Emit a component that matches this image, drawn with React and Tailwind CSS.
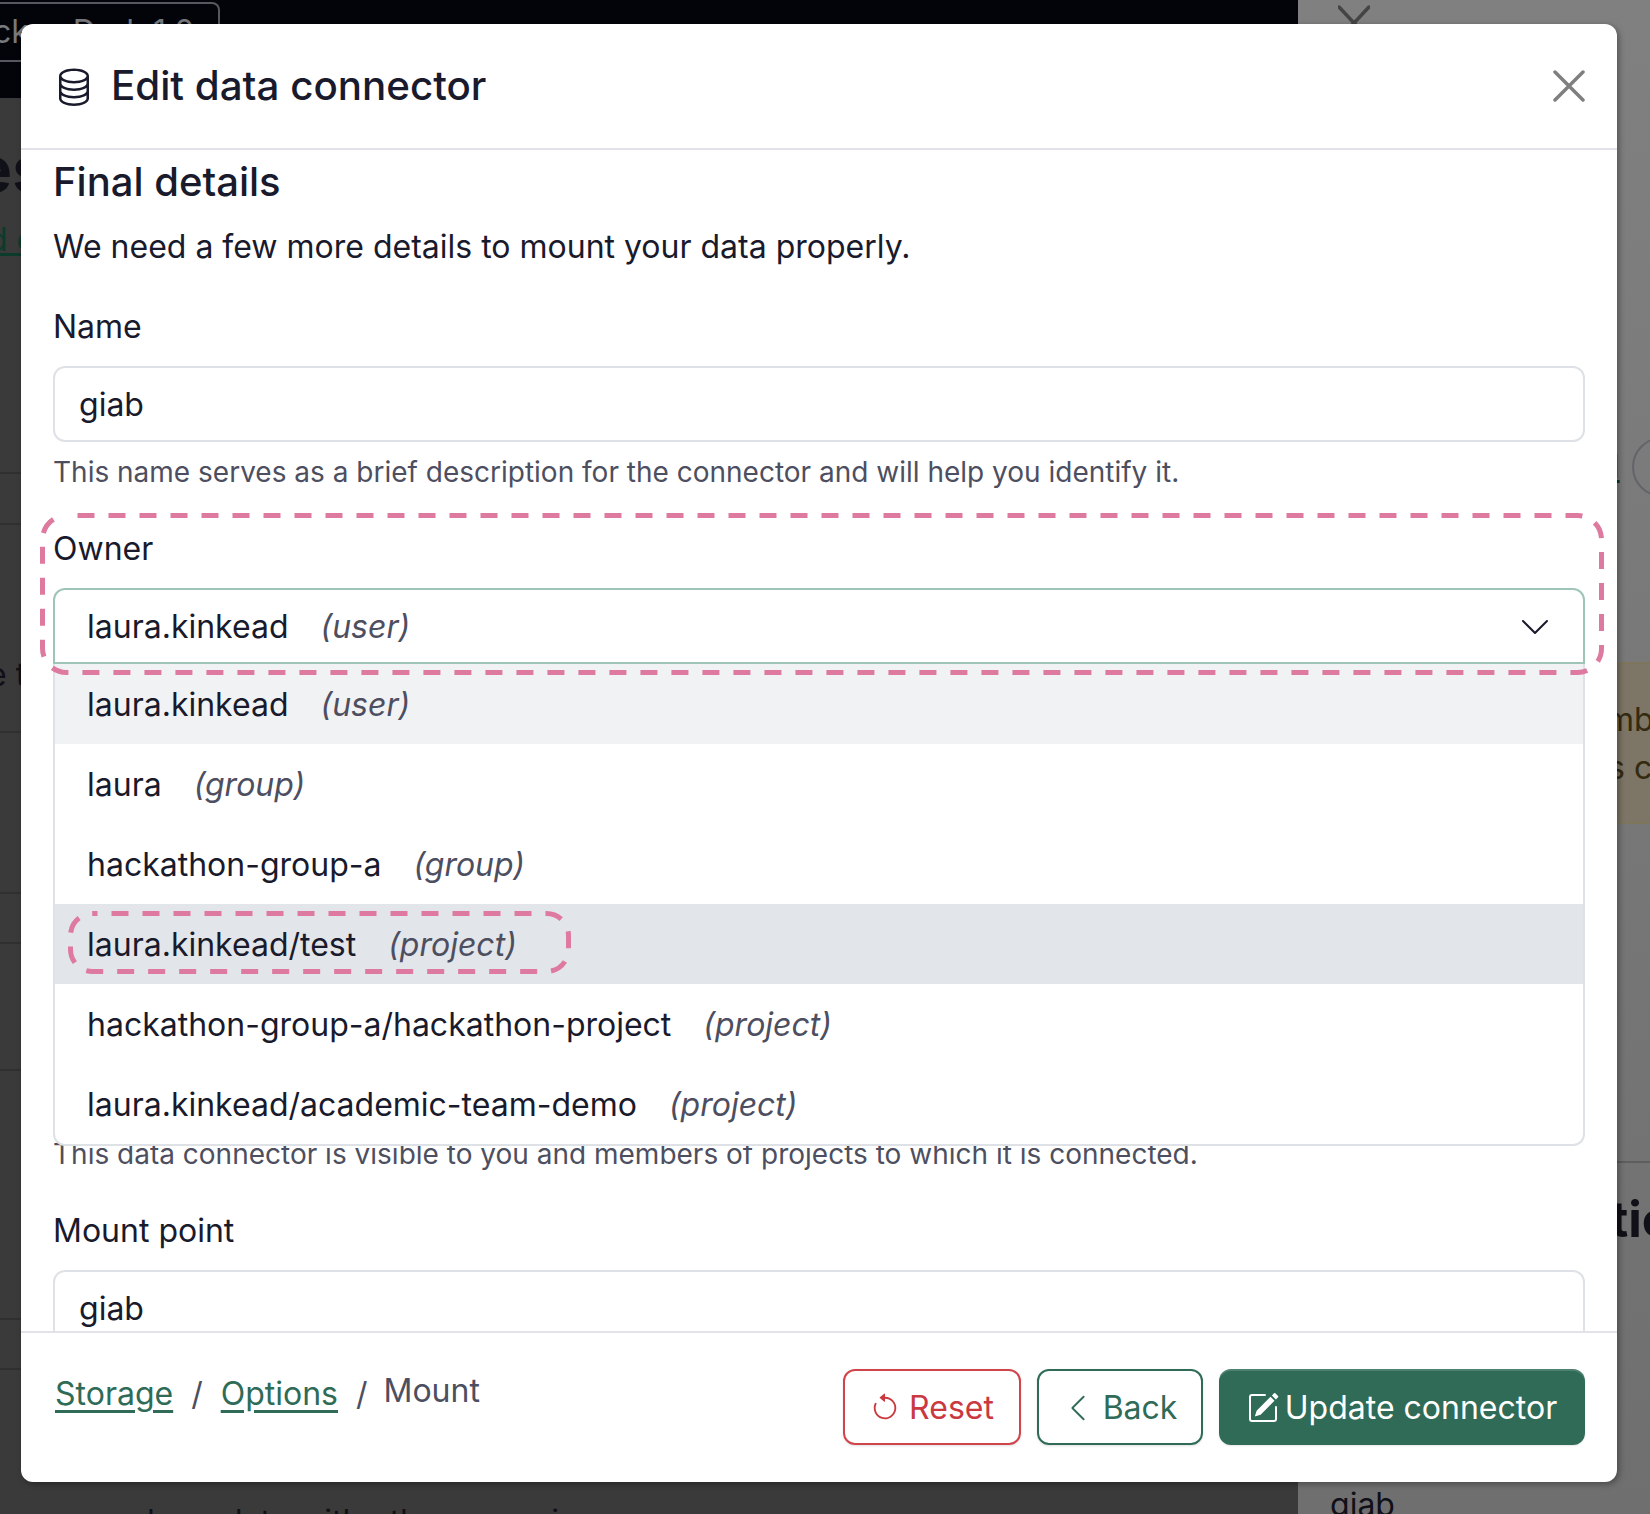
import { BsArrowCounterclockwise, BsChevronDown, BsChevronLeft, BsDatabase, BsPencilSquare } from "react-icons/bs";

const owners = [
  { name: "laura.kinkead", kind: "user", bg: "bg-[#f1f2f4]" },
  { name: "laura", kind: "group", bg: "" },
  { name: "hackathon-group-a", kind: "group", bg: "" },
  { name: "laura.kinkead/test", kind: "project", bg: "bg-[#e2e5e9]" },
  { name: "hackathon-group-a/hackathon-project", kind: "project", bg: "" },
  { name: "laura.kinkead/academic-team-demo", kind: "project", bg: "" },
];

function OwnerLabel({ name, kind }) {
  return (
    <span className="flex gap-[32px]">
      <span>{name}</span>
      <span className="italic text-[#4d4f60]">({kind})</span>
    </span>
  );
}

function Backdrop() {
  return (
    <div className="flex h-[1514px] w-[1650px] overflow-hidden bg-[#3a3a3a] text-[#101018]">
      <div className="flex w-[1298px] flex-col">
        <div className="h-[98px] shrink-0 bg-[#02040a] pt-[2px]">
          <div className="flex h-[60px] w-[220px] items-center gap-[44px] rounded-br-lg rounded-tr-lg border-2 border-l-0 border-[#55585e] text-[32px] text-[#77797d]">
            <span className="-ml-[46px]">Back</span>
            <span className="whitespace-nowrap">Dark 1.0</span>
          </div>
        </div>
        <div className="h-[376px] shrink-0 border-b-2 border-[#303030] pt-[41px]">
          <div className="-ml-[26px] text-[64px] leading-[60px] font-bold">es</div>
          <div className="mt-[21px] -ml-[12px] text-[32px] leading-[40px] text-[#0c3a2b] underline">d c</div>
        </div>
        <div className="h-[51px] shrink-0 border-b-2 border-[#303030]" />
        <div className="h-[208px] shrink-0 border-b-2 border-[#303030] pt-[130px]">
          <div className="-ml-[12px] text-[32px] leading-[40px]">e t</div>
        </div>
        <div className="h-[161px] shrink-0 border-b-2 border-[#303030]" />
        <div className="h-[50px] shrink-0 border-b-2 border-[#303030]" />
        <div className="h-[127px] shrink-0 border-b-2 border-[#303030]" />
        <div className="h-[249px] shrink-0 border-b-2 border-[#303030]" />
        <div className="h-[50px] shrink-0 border-b-2 border-[#303030]" />
        <div className="pl-[130px] pt-[132px] text-[32px] leading-[40px] whitespace-nowrap">share data with other users in your</div>
      </div>
      <div className="flex w-[352px] flex-col bg-gradient-to-b from-[#808080] to-[#6f6f6f]">
        <div className="flex h-[437px] shrink-0 justify-start pl-[40px] text-[#444]">
          <svg className="h-[36px] w-[32px]" viewBox="0 0 32 36" fill="none" stroke="currentColor" strokeWidth="3.5" strokeLinecap="round">
            <path d="M1 7 L31 39 M31 7 L1 39" />
          </svg>
        </div>
        <div className="flex h-[60px] shrink-0 items-center pl-[326px]">
          <span className="-ml-[24px] w-[24px] text-right text-[32px] text-[#0c3a2b] underline">d</span>
          <span className="ml-[12px] h-[60px] w-[60px] shrink-0 rounded-full border-2 border-[#62646a]" />
        </div>
        <div className="mt-[165px] h-[162px] shrink-0 border-y-2 border-[#7e765c] bg-[#7d7565] pl-[318px] pt-[32px] text-[32px] leading-[48px] whitespace-nowrap text-[#332a10]">
          <div className="-ml-[10px]">mb</div>
          <div className="-ml-[8px]">s c</div>
        </div>
        <div className="h-[339px] shrink-0 border-b-2 border-[#5e5e5e]" />
        <div className="pl-[318px] pt-[26px] text-[50px] leading-[60px] font-bold whitespace-nowrap">
          <span className="-ml-[6px] block">tic</span>
        </div>
        <div className="mt-[236px] pl-[32px] text-[32px] leading-[40px]">giab</div>
      </div>
    </div>
  );
}

function Dashed({ className, w, h, r, offset }) {
  return (
    <svg className={className} width={w} height={h} viewBox={`0 0 ${w} ${h}`} fill="none">
      <rect x="2.5" y="2.5" width={w - 5} height={h - 5} rx={r} stroke="#de7a9f" strokeWidth="5" strokeDasharray="17 14" strokeDashoffset={offset} />
    </svg>
  );
}

function Field({ label, help, children }) {
  return (
    <div>
      <div className="mb-[19px] leading-[40px]">{label}</div>
      {children}
      {help && <div className="mt-[12px] text-[28px] leading-[36px] text-[#4d4f60]">{help}</div>}
    </div>
  );
}

function TextBox({ value }) {
  return (
    <div className="flex h-[76px] items-center rounded-xl border-2 border-[#dee2e6] px-[24px] pt-[2px]">{value}</div>
  );
}

export default function App() {
  return (
    <div className="relative h-[1514px] w-[1650px] overflow-hidden font-['Inter',sans-serif]">
      <Backdrop />
      <div className="absolute left-[21px] top-[24px] flex h-[1458px] w-[1596px] flex-col rounded-xl bg-white text-[32px] text-[#191a2c] shadow-[2px_2px_6px_rgba(0,0,0,0.35)]">
        <div className="flex h-[126px] shrink-0 items-center justify-between border-b-2 border-[#e1e3e8] pl-[33px] pr-[32px]">
          <div className="flex items-center gap-[17px]">
            <BsDatabase className="h-[40px] w-[40px]" />
            <span className="text-[40.3px] font-medium">Edit data connector</span>
          </div>
          <svg className="h-[32px] w-[32px] text-[#7f7f7f]" viewBox="0 0 32 32" fill="none" stroke="currentColor" strokeWidth="3.5" strokeLinecap="round">
            <path d="M2 2 L30 30 M30 2 L2 30" />
          </svg>
        </div>

        <div className="relative min-h-0 flex-1 overflow-hidden pl-[32px] pr-[32px] pt-[7px]">
          <div className="text-[40px] leading-[50px] font-medium">Final details</div>
          <div className="mt-[20px] leading-[40px]">We need a few more details to mount your data properly.</div>
          <div className="mt-[40px]">
            <Field label="Name" help="This name serves as a brief description for the connector and will help you identify it.">
              <TextBox value="giab" />
            </Field>
          </div>
          <div className="relative mt-[39px]">
            <Field label="Owner" help="This data connector is visible to you and members of projects to which it is connected.">
              <div className="relative">
                <div className="flex h-[76px] items-center justify-between rounded-t-xl border-2 border-[#9fc5b8] pl-[32px] pr-[32px] pt-[2px]">
                  <OwnerLabel name="laura.kinkead" kind="user" />
                  <BsChevronDown className="h-[32px] w-[32px]" />
                </div>
                <div className="h-[460px]" />
                <div className="absolute left-0 right-0 top-[76px] z-10 overflow-hidden rounded-b-xl border-2 border-t-0 border-[#dee2e6] bg-white">
                  {owners.map((o) => (
                    <div key={o.name} className={`flex h-[80px] items-center pl-[32px] pt-[2px] ${o.bg}`}>
                      <OwnerLabel name={o.name} kind={o.kind} />
                    </div>
                  ))}
                </div>
              </div>
            </Field>
          </div>
          <div className="mt-[39px]">
            <Field label="Mount point">
              <TextBox value="giab" />
            </Field>
          </div>
        </div>

        <div className="flex h-[151px] shrink-0 items-center justify-between rounded-b-xl border-t-2 border-[#e1e3e8] pl-[34px] pr-[32px]">
          <div className="-mt-[28px] flex items-center gap-[18px]">
            <span className="text-[#2f6b57] underline underline-offset-[5px]">Storage</span>
            <span className="text-[#4d4f60]">/</span>
            <span className="text-[#2f6b57] underline underline-offset-[5px]">Options</span>
            <span className="text-[#4d4f60]">/</span>
            <span className="-ml-[2px] -mt-[6px] text-[#4d4f60]">Mount</span>
          </div>
          <div className="-mt-[2px] flex gap-[16px]">
            <button className="flex h-[76px] w-[178px] items-center justify-center gap-[9px] rounded-xl border-2 border-[#d0454c] pt-[2px] text-[#c9393f] shadow-sm">
              <BsArrowCounterclockwise className="h-[30px] w-[30px]" />
              Reset
            </button>
            <button className="flex h-[76px] w-[166px] items-center justify-center gap-[10px] rounded-xl border-2 border-[#2f6b57] pt-[2px] text-[#2f6b57] shadow-sm">
              <BsChevronLeft className="h-[30px] w-[30px]" />
              Back
            </button>
            <button className="flex h-[76px] w-[366px] items-center justify-center gap-[6px] rounded-xl bg-[#2f6b57] pt-[2px] text-white shadow-[inset_0_2px_0_rgba(255,255,255,0.15),0_1px_2px_rgba(0,0,0,0.1)]">
              <BsPencilSquare className="h-[32px] w-[32px]" />
              Update connector
            </button>
          </div>
        </div>
      </div>
      <Dashed className="absolute left-[40px] top-[513px] z-20" w={1564} h={162} r={24} offset={-11} />
      <Dashed className="absolute left-[68px] top-[911px] z-20" w={503} h={63} r={22} offset={-19} />
    </div>
  );
}
